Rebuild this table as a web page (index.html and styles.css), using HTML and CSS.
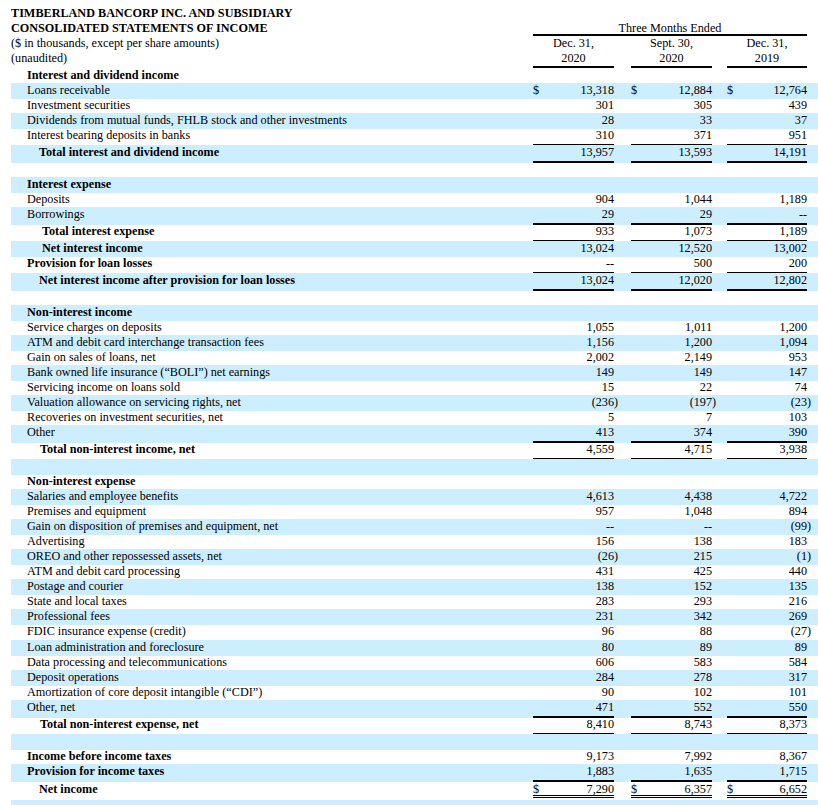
FILE: index.html
```html
<!DOCTYPE html>
<html lang="en">
<head>
<meta charset="utf-8">
<title>Timberland Bancorp - Consolidated Statements of Income</title>
<link rel="stylesheet" href="styles.css">
</head>
<body>
<div class="page">
<table class="stmt">
<colgroup>
<col class="c-label"><col class="c-num"><col class="c-par1"><col class="c-num"><col class="c-par2"><col class="c-num3"><col class="c-par3">
</colgroup>
<thead>
<tr><td class="title">TIMBERLAND BANCORP INC. AND SUBSIDIARY</td><td colspan="6"></td></tr>
<tr><td class="title">CONSOLIDATED STATEMENTS OF INCOME</td><td colspan="5" class="period">Three Months Ended</td><td></td></tr>
<tr><td>($ in thousands, except per share amounts)</td><td class="ch">Dec. 31,</td><td></td><td class="ch">Sept. 30,</td><td></td><td class="ch">Dec. 31,</td><td></td></tr>
<tr><td>(unaudited)</td><td class="ch b2">2020</td><td></td><td class="ch b2">2020</td><td></td><td class="ch b2">2019</td><td></td></tr>
</thead>
<tbody>
<tr class="first"><td class="sec">Interest and dividend income</td><td colspan="6"></td></tr>
<tr><td class="i">Loans receivable</td><td class="n"><span class="cur">$</span>13,318</td><td></td><td class="n"><span class="cur">$</span>12,884</td><td></td><td class="n"><span class="cur">$</span>12,764</td><td></td></tr>
<tr><td class="i">Investment securities</td><td class="n">301</td><td></td><td class="n">305</td><td></td><td class="n">439</td><td></td></tr>
<tr><td class="i">Dividends from mutual funds, FHLB stock and other investments</td><td class="n">28</td><td></td><td class="n">33</td><td></td><td class="n">37</td><td></td></tr>
<tr class="tb"><td class="i">Interest bearing deposits in banks</td><td class="n b1">310</td><td></td><td class="n b1">371</td><td></td><td class="n b1">951</td><td></td></tr>
<tr><td class="sub t28">Total interest and dividend income</td><td class="n b2">13,957</td><td></td><td class="n b2">13,593</td><td></td><td class="n b2">14,191</td><td></td></tr>
<tr><td colspan="7">&nbsp;</td></tr>
<tr><td class="sec">Interest expense</td><td colspan="6"></td></tr>
<tr><td class="i">Deposits</td><td class="n">904</td><td></td><td class="n">1,044</td><td></td><td class="n">1,189</td><td></td></tr>
<tr><td class="i">Borrowings</td><td class="n b2">29</td><td></td><td class="n b2">29</td><td></td><td class="n b2">--</td><td></td></tr>
<tr class="tb"><td class="sub t31">Total interest expense</td><td class="n b1">933</td><td></td><td class="n b1">1,073</td><td></td><td class="n b1">1,189</td><td></td></tr>
<tr><td class="sub t31">Net interest income</td><td class="n">13,024</td><td></td><td class="n">12,520</td><td></td><td class="n">13,002</td><td></td></tr>
<tr class="tb"><td class="sec">Provision for loan losses</td><td class="n b1">--</td><td></td><td class="n b1">500</td><td></td><td class="n b1">200</td><td></td></tr>
<tr><td class="sub t28">Net interest income after provision for loan losses</td><td class="n b2">13,024</td><td></td><td class="n b2">12,020</td><td></td><td class="n b2">12,802</td><td></td></tr>
<tr><td colspan="7">&nbsp;</td></tr>
<tr><td class="sec">Non-interest income</td><td colspan="6"></td></tr>
<tr><td class="i">Service charges on deposits</td><td class="n">1,055</td><td></td><td class="n">1,011</td><td></td><td class="n">1,200</td><td></td></tr>
<tr><td class="i">ATM and debit card interchange transaction fees</td><td class="n">1,156</td><td></td><td class="n">1,200</td><td></td><td class="n">1,094</td><td></td></tr>
<tr><td class="i">Gain on sales of loans, net</td><td class="n">2,002</td><td></td><td class="n">2,149</td><td></td><td class="n">953</td><td></td></tr>
<tr><td class="i">Bank owned life insurance (“BOLI”) net earnings</td><td class="n">149</td><td></td><td class="n">149</td><td></td><td class="n">147</td><td></td></tr>
<tr><td class="i">Servicing income on loans sold</td><td class="n">15</td><td></td><td class="n">22</td><td></td><td class="n">74</td><td></td></tr>
<tr><td class="i">Valuation allowance on servicing rights, net</td><td class="n">(236</td><td class="p">)</td><td class="n">(197</td><td class="p">)</td><td class="n">(23</td><td class="p">)</td></tr>
<tr><td class="i">Recoveries on investment securities, net</td><td class="n">5</td><td></td><td class="n">7</td><td></td><td class="n">103</td><td></td></tr>
<tr><td class="i">Other</td><td class="n b2">413</td><td></td><td class="n b2">374</td><td></td><td class="n b2">390</td><td></td></tr>
<tr class="tb"><td class="sub t29">Total non-interest income, net</td><td class="n b1">4,559</td><td></td><td class="n b1">4,715</td><td></td><td class="n b1">3,938</td><td></td></tr>
<tr><td colspan="7">&nbsp;</td></tr>
<tr><td class="sec">Non-interest expense</td><td colspan="6"></td></tr>
<tr><td class="i">Salaries and employee benefits</td><td class="n">4,613</td><td></td><td class="n">4,438</td><td></td><td class="n">4,722</td><td></td></tr>
<tr><td class="i">Premises and equipment</td><td class="n">957</td><td></td><td class="n">1,048</td><td></td><td class="n">894</td><td></td></tr>
<tr><td class="i">Gain on disposition of premises and equipment, net</td><td class="n">--</td><td></td><td class="n">--</td><td></td><td class="n">(99</td><td class="p">)</td></tr>
<tr><td class="i">Advertising</td><td class="n">156</td><td></td><td class="n">138</td><td></td><td class="n">183</td><td></td></tr>
<tr><td class="i">OREO and other repossessed assets, net</td><td class="n">(26</td><td class="p">)</td><td class="n">215</td><td></td><td class="n">(1</td><td class="p">)</td></tr>
<tr><td class="i">ATM and debit card processing</td><td class="n">431</td><td></td><td class="n">425</td><td></td><td class="n">440</td><td></td></tr>
<tr><td class="i">Postage and courier</td><td class="n">138</td><td></td><td class="n">152</td><td></td><td class="n">135</td><td></td></tr>
<tr><td class="i">State and local taxes</td><td class="n">283</td><td></td><td class="n">293</td><td></td><td class="n">216</td><td></td></tr>
<tr><td class="i">Professional fees</td><td class="n">231</td><td></td><td class="n">342</td><td></td><td class="n">269</td><td></td></tr>
<tr class="tall"><td class="i">FDIC insurance expense (credit)</td><td class="n">96</td><td></td><td class="n">88</td><td></td><td class="n">(27</td><td class="p">)</td></tr>
<tr><td class="i">Loan administration and foreclosure</td><td class="n">80</td><td></td><td class="n">89</td><td></td><td class="n">89</td><td></td></tr>
<tr><td class="i">Data processing and telecommunications</td><td class="n">606</td><td></td><td class="n">583</td><td></td><td class="n">584</td><td></td></tr>
<tr><td class="i">Deposit operations</td><td class="n">284</td><td></td><td class="n">278</td><td></td><td class="n">317</td><td></td></tr>
<tr><td class="i">Amortization of core deposit intangible (“CDI”)</td><td class="n">90</td><td></td><td class="n">102</td><td></td><td class="n">101</td><td></td></tr>
<tr><td class="i">Other, net</td><td class="n b2">471</td><td></td><td class="n b2">552</td><td></td><td class="n b2">550</td><td></td></tr>
<tr class="tb"><td class="sub t29">Total non-interest expense, net</td><td class="n b1">8,410</td><td></td><td class="n b1">8,743</td><td></td><td class="n b1">8,373</td><td></td></tr>
<tr><td colspan="7">&nbsp;</td></tr>
<tr><td class="sec">Income before income taxes</td><td class="n">9,173</td><td></td><td class="n">7,992</td><td></td><td class="n">8,367</td><td></td></tr>
<tr><td class="sec">Provision for income taxes</td><td class="n b2">1,883</td><td></td><td class="n b2">1,635</td><td></td><td class="n b2">1,715</td><td></td></tr>
<tr class="net"><td class="sub t28">Net income</td><td class="n"><div class="dbl"><span class="cur">$</span>7,290</div></td><td></td><td class="n"><div class="dbl"><span class="cur">$</span>6,357</div></td><td></td><td class="n"><div class="dbl"><span class="cur">$</span>6,652</div></td><td></td></tr>
<tr><td colspan="7">&nbsp;</td></tr>
</tbody>
</table>
</div>
</body>
</html>
```

FILE: styles.css
```css
html, body {
  margin: 0;
  padding: 0;
  background: #ffffff;
}

body {
  font-family: "Liberation Serif", "Times New Roman", serif;
  font-size: 12.2px;
  color: #000000;
}

.page {
  padding: 6px 0 0 11px;
}

.stmt {
  border-collapse: separate;
  border-spacing: 0;
  table-layout: fixed;
  width: 807px;
}

.c-label { width: 522px; }
.c-num { width: 81px; }
.c-par1 { width: 17px; }
.c-par2 { width: 15px; }
.c-num3 { width: 80px; }
.c-par3 { width: 11px; }

.stmt td {
  padding: 0;
  vertical-align: top;
  white-space: nowrap;
}

.stmt thead td {
  line-height: 15px;
}

.stmt .title {
  font-weight: bold;
}

.stmt thead .period {
  text-align: center;
  padding-top: 1px;
  line-height: 12px;
  border-bottom: 2px solid #000;
}

.stmt .ch {
  text-align: center;
}

/* data rows: alternating light-blue banding */
.stmt tbody tr:nth-child(odd) td {
  line-height: 13px;
  padding-bottom: 1px;
}

.stmt tbody tr:nth-child(even) {
  background: #cceeff;
}

.stmt tbody tr:nth-child(even) td {
  line-height: 15px;
  padding-bottom: 1px;
}

.stmt tbody tr.first td {
  line-height: 14px;
}

.stmt tbody tr.tb td,
.stmt tbody tr.tall td {
  padding-bottom: 2px;
}

.stmt tbody tr.net td {
  padding-top: 1px;
  line-height: 12px;
  padding-bottom: 2px;
}

.sec {
  font-weight: bold;
  padding-left: 16px !important;
}

.i {
  padding-left: 16px !important;
}

.sub {
  font-weight: bold;
}

.t28 { padding-left: 28px !important; }
.t29 { padding-left: 29px !important; }
.t31 { padding-left: 31px !important; }

.n {
  text-align: right;
}

.p {
  text-align: left;
}

.cur {
  float: left;
}

.b1 { border-bottom: 1px solid #000; }
.b2 { border-bottom: 2px solid #000; }

.dbl {
  border-bottom: 3px double #000;
}
```
